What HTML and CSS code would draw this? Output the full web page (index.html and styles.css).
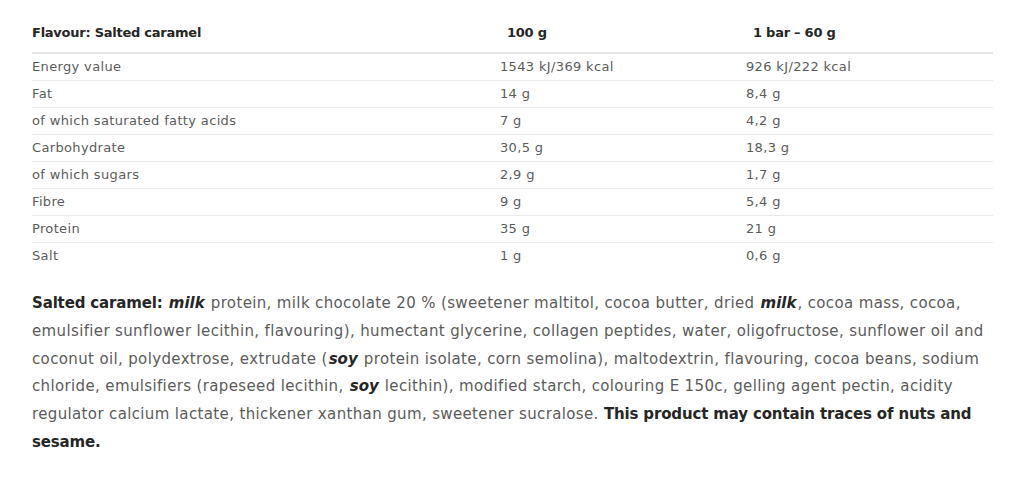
FILE: index.html
```html
<!DOCTYPE html>
<html lang="en">
<head>
<meta charset="utf-8">
<title>Nutrition facts – Salted caramel</title>
<link rel="stylesheet" href="styles.css">
</head>
<body>
<div class="page">
  <table class="nutrition">
    <colgroup>
      <col class="c-name">
      <col class="c-100">
      <col class="c-bar">
    </colgroup>
    <thead>
      <tr>
        <th class="h-name">Flavour: Salted caramel</th>
        <th class="h-val">100 g</th>
        <th class="h-val">1 bar – 60 g</th>
      </tr>
    </thead>
    <tbody>
      <tr><td>Energy value</td><td>1543 kJ/369 kcal</td><td>926 kJ/222 kcal</td></tr>
      <tr><td>Fat</td><td>14 g</td><td>8,4 g</td></tr>
      <tr><td>of which saturated fatty acids</td><td>7 g</td><td>4,2 g</td></tr>
      <tr><td>Carbohydrate</td><td>30,5 g</td><td>18,3 g</td></tr>
      <tr><td>of which sugars</td><td>2,9 g</td><td>1,7 g</td></tr>
      <tr><td>Fibre</td><td>9 g</td><td>5,4 g</td></tr>
      <tr><td>Protein</td><td>35 g</td><td>21 g</td></tr>
      <tr><td>Salt</td><td>1 g</td><td>0,6 g</td></tr>
    </tbody>
  </table>
  <p class="ingredients"><strong>Salted caramel:</strong> <em>milk</em> protein, milk chocolate 20 % (sweetener maltitol, cocoa butter, dried <em>milk</em>, cocoa mass, cocoa, emulsifier sunflower lecithin, flavouring), humectant glycerine, collagen peptides, water, oligofructose, sunflower oil and coconut oil, polydextrose, extrudate (<em>soy</em> protein isolate, corn semolina), maltodextrin, flavouring, cocoa beans, sodium chloride, emulsifiers (rapeseed lecithin, <em>soy</em> lecithin), modified starch, colouring E 150c, gelling agent pectin, acidity regulator calcium lactate, thickener xanthan gum, sweetener sucralose. <strong>This product may contain traces of nuts and sesame.</strong></p>
</div>
</body>
</html>
```
FILE: styles.css
```css
html, body {
  margin: 0;
  padding: 0;
  background: #ffffff;
}

body {
  font-family: "DejaVu Sans", "Open Sans", sans-serif;
  color: #5b5b5b;
}

.page {
  padding: 23px 31px 0 32px;
}

.nutrition {
  width: 961px;
  border-collapse: collapse;
  table-layout: fixed;
  font-size: 13px;
  letter-spacing: 0.35px;
}

.c-name { width: 468px; }
.c-100 { width: 246px; }
.c-bar { width: 247px; }

.nutrition th {
  text-align: left;
  font-weight: bold;
  color: #262626;
  letter-spacing: -0.25px;
  line-height: 20px;
  padding: 0 0 9px 0;
  border-bottom: 2px solid #e6e6e6;
}

.nutrition th.h-val {
  padding-left: 7px;
}

.nutrition td {
  padding: 0;
  height: 26px;
  line-height: 26px;
  border-bottom: 1px solid #e9e9e9;
  white-space: nowrap;
}

.nutrition tbody tr:last-child td {
  border-bottom: none;
}

.ingredients {
  margin: 21px 0 0 0;
  width: 961px;
  font-size: 15px;
  line-height: 27.75px;
  letter-spacing: 0.36px;
}

.ingredients strong {
  color: #262626;
  letter-spacing: -0.15px;
}

.ingredients em {
  font-style: italic;
  font-weight: bold;
  color: #262626;
  letter-spacing: 0;
  padding: 0 1px;
}
```
